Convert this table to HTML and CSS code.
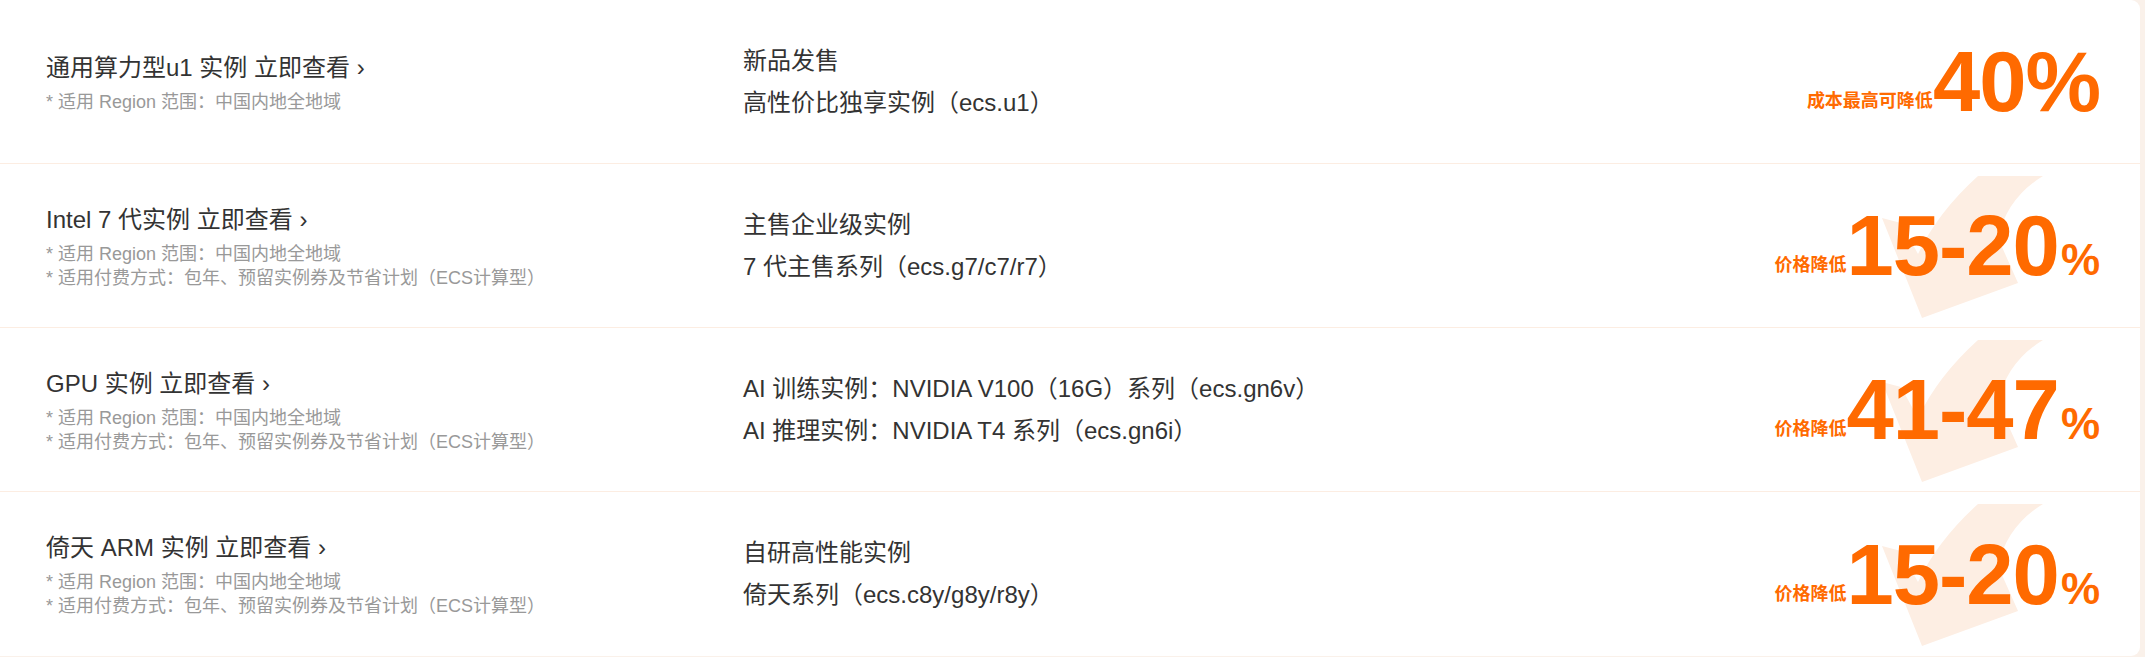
FILE: index.html
```html
<!DOCTYPE html>
<html lang="zh-CN">
<head>
<meta charset="utf-8">
<title>ECS 实例</title>
<link rel="stylesheet" href="styles.css">
</head>
<body>
<div class="card">
  <div class="row">
    <div class="col-left">
      <a class="title" href="#">通用算力型u1 实例 立即查看 <span class="chev">›</span></a>
      <p class="note">* 适用 Region 范围：中国内地全地域</p>
    </div>
    <div class="col-mid">
      <p>新品发售</p>
      <p>高性价比独享实例（ecs.u1）</p>
    </div>
    <div class="col-right">
      <span class="label">成本最高可降低</span><span class="num">40%</span>
    </div>
  </div>
  <div class="row">
    <svg class="mark" viewBox="0 0 161 142" aria-hidden="true"><path d="M0 42 L19 47 L36 78 Q56 36 96 0 L161 0 Q125 22 116 62 L136 107 L40 142 Z"/></svg>
    <div class="col-left">
      <a class="title" href="#">Intel 7 代实例 立即查看 <span class="chev">›</span></a>
      <p class="note">* 适用 Region 范围：中国内地全地域</p>
      <p class="note">* 适用付费方式：包年、预留实例券及节省计划（ECS计算型）</p>
    </div>
    <div class="col-mid">
      <p>主售企业级实例</p>
      <p>7 代主售系列（ecs.g7/c7/r7）</p>
    </div>
    <div class="col-right">
      <span class="label">价格降低</span><span class="num">15-20</span><span class="pct">%</span>
    </div>
  </div>
  <div class="row">
    <svg class="mark" viewBox="0 0 161 142" aria-hidden="true"><path d="M0 42 L19 47 L36 78 Q56 36 96 0 L161 0 Q125 22 116 62 L136 107 L40 142 Z"/></svg>
    <div class="col-left">
      <a class="title" href="#">GPU 实例 立即查看 <span class="chev">›</span></a>
      <p class="note">* 适用 Region 范围：中国内地全地域</p>
      <p class="note">* 适用付费方式：包年、预留实例券及节省计划（ECS计算型）</p>
    </div>
    <div class="col-mid">
      <p>AI 训练实例：NVIDIA V100（16G）系列（ecs.gn6v）</p>
      <p>AI 推理实例：NVIDIA T4 系列（ecs.gn6i）</p>
    </div>
    <div class="col-right">
      <span class="label">价格降低</span><span class="num">41-47</span><span class="pct">%</span>
    </div>
  </div>
  <div class="row">
    <svg class="mark" viewBox="0 0 161 142" aria-hidden="true"><path d="M0 42 L19 47 L36 78 Q56 36 96 0 L161 0 Q125 22 116 62 L136 107 L40 142 Z"/></svg>
    <div class="col-left">
      <a class="title" href="#">倚天 ARM 实例 立即查看 <span class="chev">›</span></a>
      <p class="note">* 适用 Region 范围：中国内地全地域</p>
      <p class="note">* 适用付费方式：包年、预留实例券及节省计划（ECS计算型）</p>
    </div>
    <div class="col-mid">
      <p>自研高性能实例</p>
      <p>倚天系列（ecs.c8y/g8y/r8y）</p>
    </div>
    <div class="col-right">
      <span class="label">价格降低</span><span class="num">15-20</span><span class="pct">%</span>
    </div>
  </div>
</div>
</body>
</html>
```

FILE: styles.css
```css
html, body {
  margin: 0;
  padding: 0;
}
body {
  background: #faf1ea;
  font-family: "Liberation Sans", "Noto Sans CJK SC", sans-serif;
  color: #333;
  height: 657px;
  overflow: hidden;
}
p { margin: 0; }

.card {
  width: 2140px;
  height: 656px;
  background: #fff;
  border-radius: 0 9px 9px 0;
  display: grid;
  grid-template-rows: repeat(4, 1fr);
  overflow: hidden;
}

.row {
  position: relative;
  display: grid;
  grid-template-columns: 697px 1fr auto;
  align-items: center;
  padding: 0 40px 0 46px;
  border-bottom: 1px solid #fcede2;
}
.row:last-child { border-bottom: none; }

.mark {
  position: absolute;
  left: 1882px;
  top: 12px;
  width: 161px;
  height: 142px;
  fill: #fdeee3;
  z-index: 0;
}

.col-left, .col-mid, .col-right {
  position: relative;
  z-index: 1;
}

.title {
  display: block;
  font-size: 24px;
  line-height: 36px;
  color: #333;
  text-decoration: none;
  margin-bottom: 4px;
}
.chev {
  font-size: 24px;
}
.note {
  font-size: 18px;
  line-height: 24px;
  color: #999;
}

.col-mid p {
  font-size: 24px;
  line-height: 42px;
  color: #333;
}

.col-right {
  display: flex;
  align-items: baseline;
  justify-content: flex-end;
  color: #ff6a00;
  font-weight: bold;
  line-height: 1;
}
.label {
  font-size: 18px;
  position: relative;
  top: -4px;
}
.num {
  font-size: 85px;
  letter-spacing: -1px;
}
.pct {
  font-size: 44px;
  margin-left: 2px;
}
```
